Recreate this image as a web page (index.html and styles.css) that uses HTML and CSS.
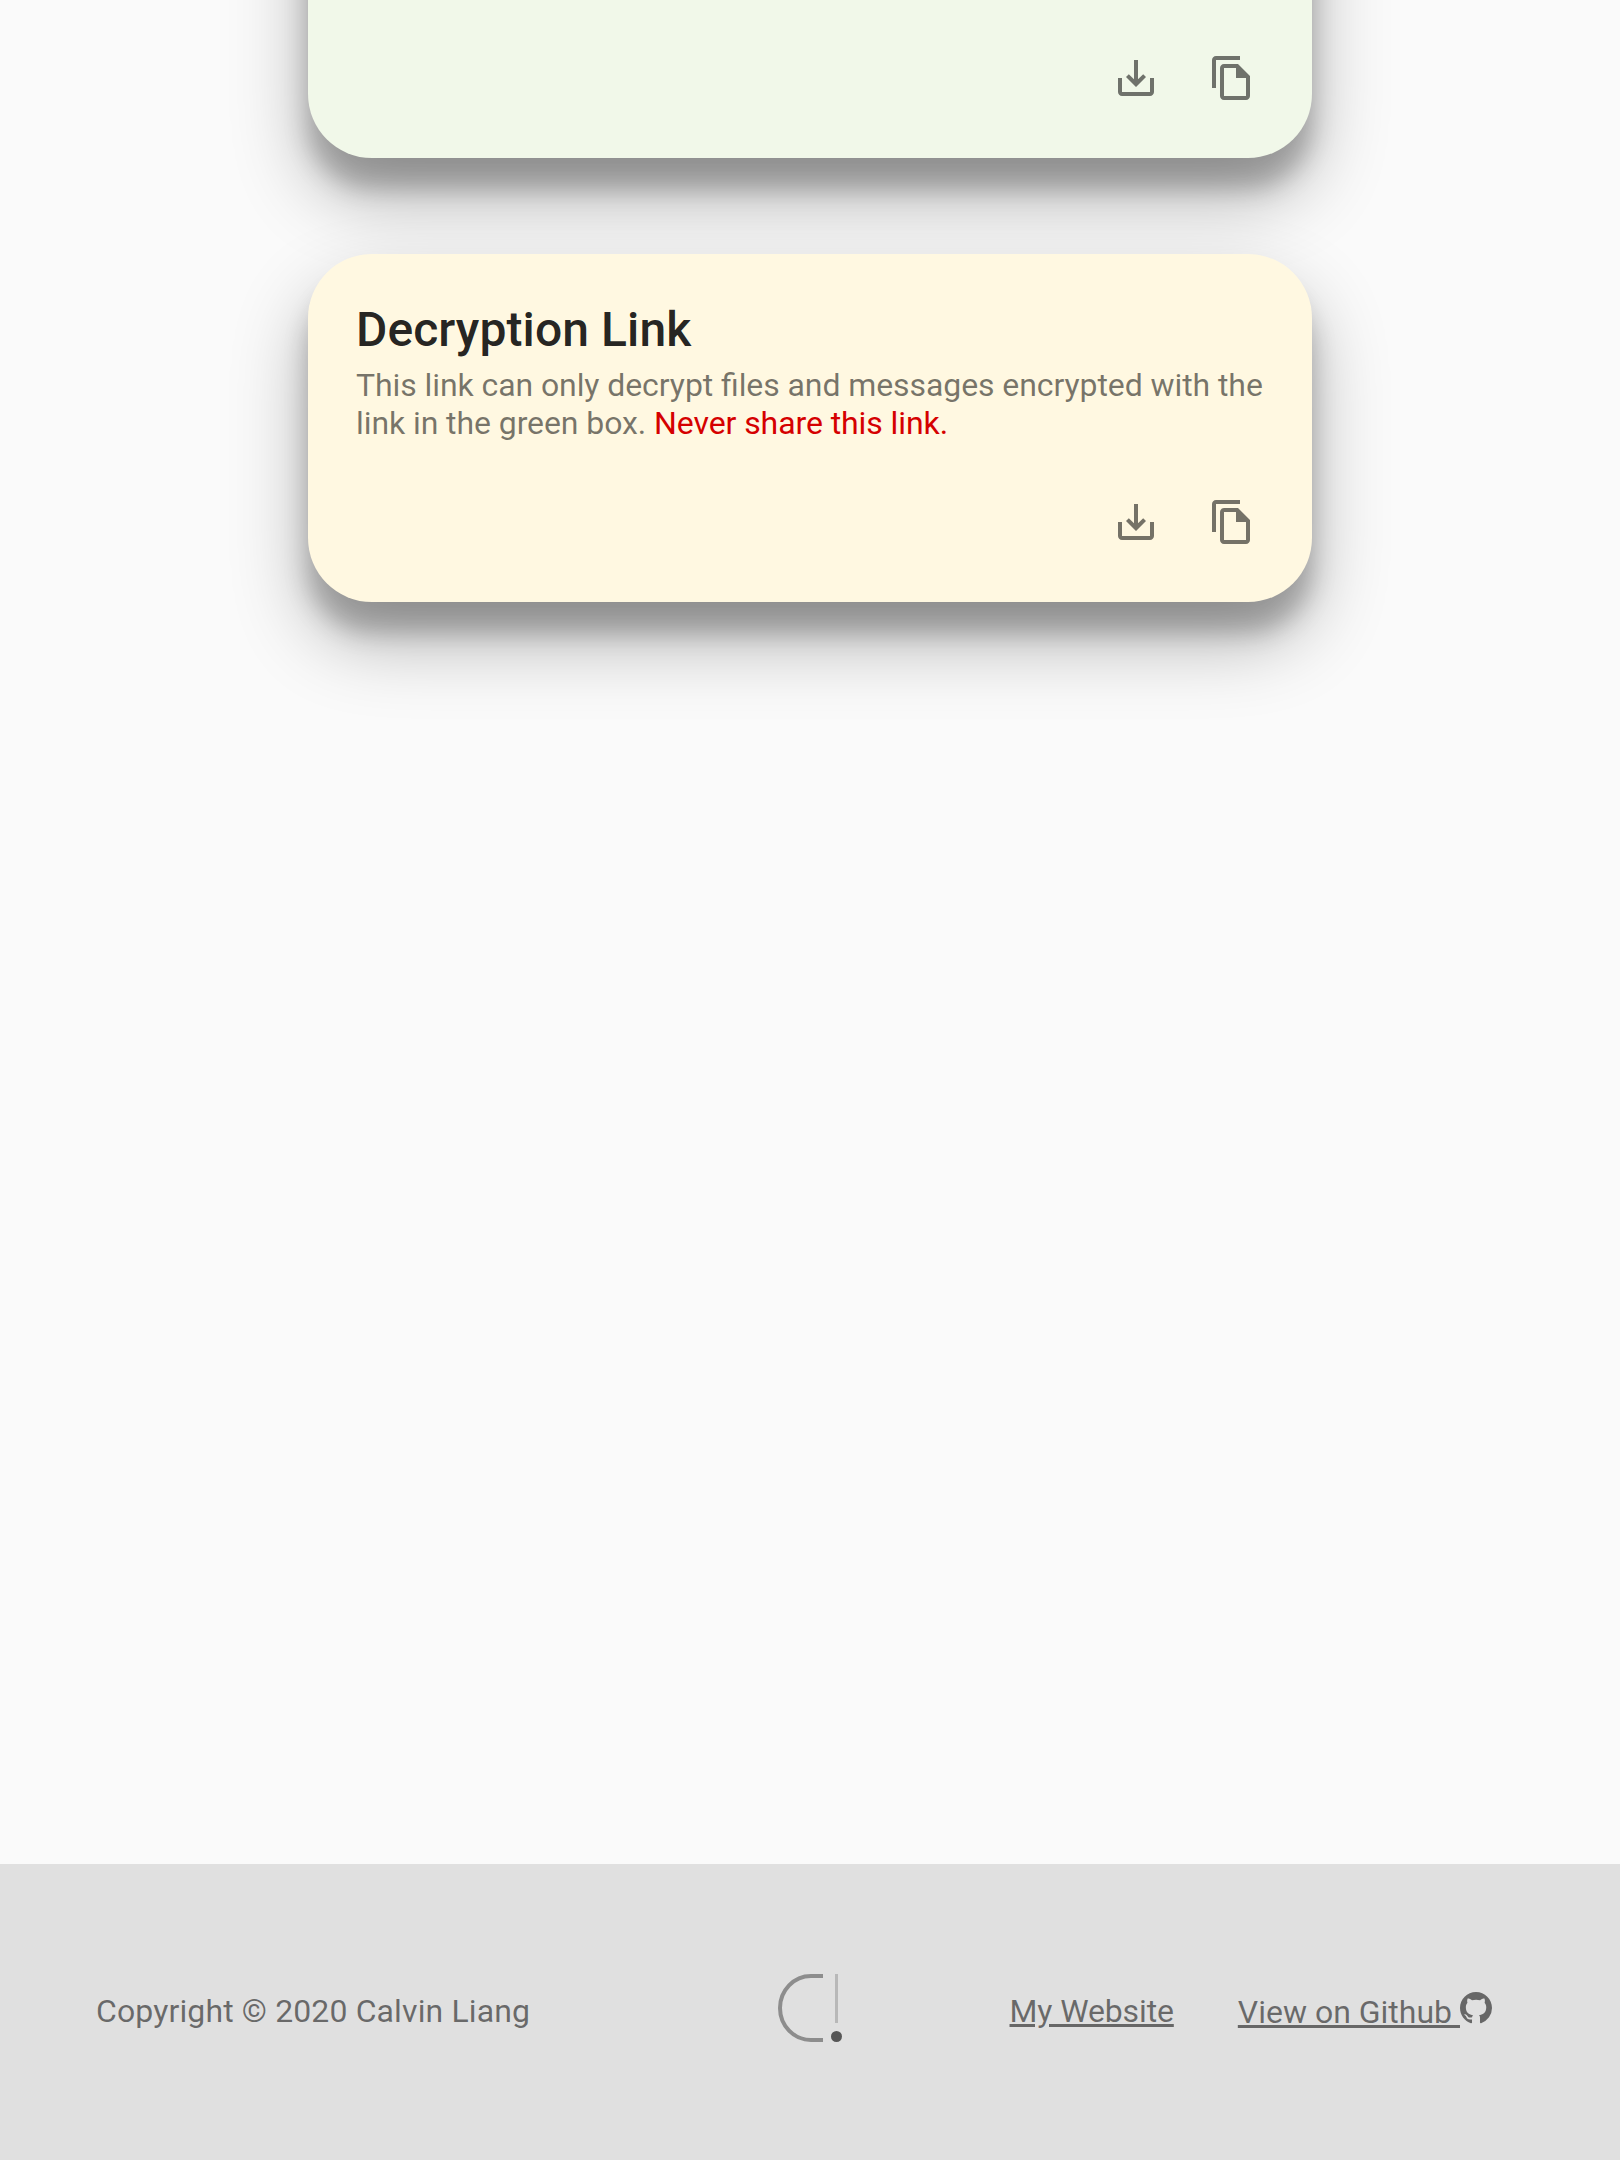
FILE: index.html
```html
<!DOCTYPE html>
<html lang="en">
<head>
<meta charset="utf-8">
<title>Encryption Links</title>
<link rel="stylesheet" href="styles.css">
</head>
<body>
<svg class="defs" aria-hidden="true">
  <symbol id="save" viewBox="0 0 24 24"><path d="M19 12v7H5v-7H3v7c0 1.100.9 2 2 2h14c1.100 0 2-.9 2-2v-7h-2zm-6 .67l2.590-2.580L17 11.500l-5 5-5-5 1.410-1.410L11 12.670V3h2z"/></symbol>
  <symbol id="copy" viewBox="0 0 24 24"><path d="M16 1H4c-1.100 0-2 .9-2 2v14h2V3h12V1zm-1 4H8c-1.100 0-1.990.9-1.990 2L6 21c0 1.100.89 2 1.990 2H19c1.100 0 2-.9 2-2V11l-6-6zM8 21V7h6v5h5v9H8z"/></symbol>
</svg>
<main class="content">
  <section class="card card-green">
    <div class="actions">
      <button class="icon-button" aria-label="Download"><svg class="icon"><use href="#save"/></svg></button>
      <button class="icon-button" aria-label="Copy"><svg class="icon"><use href="#copy"/></svg></button>
    </div>
  </section>
  <section class="card card-yellow">
    <h2 class="title">Decryption Link</h2>
    <p class="description">This link can only decrypt files and messages encrypted with the link in the green box. <span class="warning">Never share this link.</span></p>
    <div class="actions">
      <button class="icon-button" aria-label="Download"><svg class="icon"><use href="#save"/></svg></button>
      <button class="icon-button" aria-label="Copy"><svg class="icon"><use href="#copy"/></svg></button>
    </div>
  </section>
</main>
<footer class="footer">
  <div class="copyright">Copyright © 2020 Calvin Liang</div>
  <svg class="logo" viewBox="0 0 64 68">
    <path d="M45 2H33a31 32 0 0 0 0 64h12" fill="none" stroke="#8d8d8d" stroke-width="4"/>
    <path d="M58.500 0v49" stroke="#b8b8b8" stroke-width="3"/>
    <circle cx="58.500" cy="62.500" r="5.500" fill="#575757"/>
  </svg>
  <nav class="links">
    <a class="link link-website" href="#">My Website</a>
    <a class="link link-github" href="#">View on Github <svg class="github" viewBox="0 0 16 16"><path d="M8 0C3.580 0 0 3.580 0 8c0 3.540 2.290 6.530 5.470 7.590.4.070.55-.17.55-.38 0-.19-.01-.82-.01-1.490-2.010.37-2.530-.49-2.690-.94-.09-.23-.48-.94-.82-1.130-.28-.15-.68-.52-.01-.53.63-.01 1.080.58 1.230.82.72 1.210 1.870.87 2.330.66.070-.52.28-.87.51-1.070-1.780-.2-3.640-.89-3.640-3.950 0-.87.31-1.590.82-2.150-.08-.2-.36-1.020.08-2.120 0 0 .67-.21 2.200.82.64-.18 1.320-.27 2-.27s1.360.09 2 .27c1.530-1.040 2.200-.82 2.200-.82.44 1.100.16 1.920.08 2.120.51.56.82 1.270.82 2.150 0 3.070-1.870 3.750-3.650 3.950.29.25.54.73.54 1.480 0 1.070-.01 1.930-.01 2.200 0 .21.15.46.55.38A8.010 8.010 0 0 0 16 8c0-4.420-3.580-8-8-8z"/></svg></a>
  </nav>
</footer>
</body>
</html>
```
FILE: styles.css
```css
* { box-sizing: border-box; }
body {
  margin: 0;
  height: 2160px;
  display: flex;
  flex-direction: column;
  overflow: hidden;
  background: #fafafa;
  color: rgba(0, 0, 0, .54);
  font: 32px/38px Roboto, sans-serif;
}
.defs { display: none; }
.content {
  flex: 1;
  display: flex;
  flex-direction: column;
  align-items: center;
  gap: 96px;
}
.card {
  width: 1004px;
  display: flex;
  flex-direction: column;
  justify-content: flex-end;
  padding: 48px 48px 32px;
  border-radius: 64px;
  box-shadow: 0 38px 76px rgba(0, 0, 0, .3), 0 30px 24px rgba(0, 0, 0, .22);
}
.card-green {
  height: 348px;
  margin-top: -190px;
  background: #f1f8e9;
}
.card-yellow { height: 348px; background: #fff8e1; }
.title {
  margin: 0 0 8px;
  color: rgba(0, 0, 0, .87);
  font-size: 48px;
  font-weight: 500;
  line-height: 56px;
  letter-spacing: .09px;
}
.description {
  margin: 0 -10px 32px 0;
  letter-spacing: -.085px;
  font-feature-settings: "liga" 1;
}
.warning { color: #d50000; }
.actions { display: flex; justify-content: flex-end; margin-right: -16px; }
.icon-button {
  display: flex;
  width: 96px;
  height: 96px;
  padding: 24px;
  border: 0;
  background: none;
  color: inherit;
}
.icon { width: 48px; height: 48px; fill: currentColor; }
.footer {
  height: 296px;
  display: grid;
  grid-template-columns: 1fr 64px 1fr;
  align-items: center;
  padding: 0 96px;
  background: #e0e0e0;
  color: rgba(0, 0, 0, .54);
}
.copyright { padding-bottom: 2px; letter-spacing: .12px; }
.logo { width: 64px; height: 68px; margin-top: -8px; }
.links { display: flex; justify-content: flex-end; gap: 64px; padding-right: 32px; }
.link { color: inherit; white-space: nowrap; }
.link-website { margin-top: -1px; letter-spacing: -.13px; }
.link-github { margin-top: -1px; }
.github { width: 32px; height: 32px; fill: currentColor; vertical-align: -1px; }
```
